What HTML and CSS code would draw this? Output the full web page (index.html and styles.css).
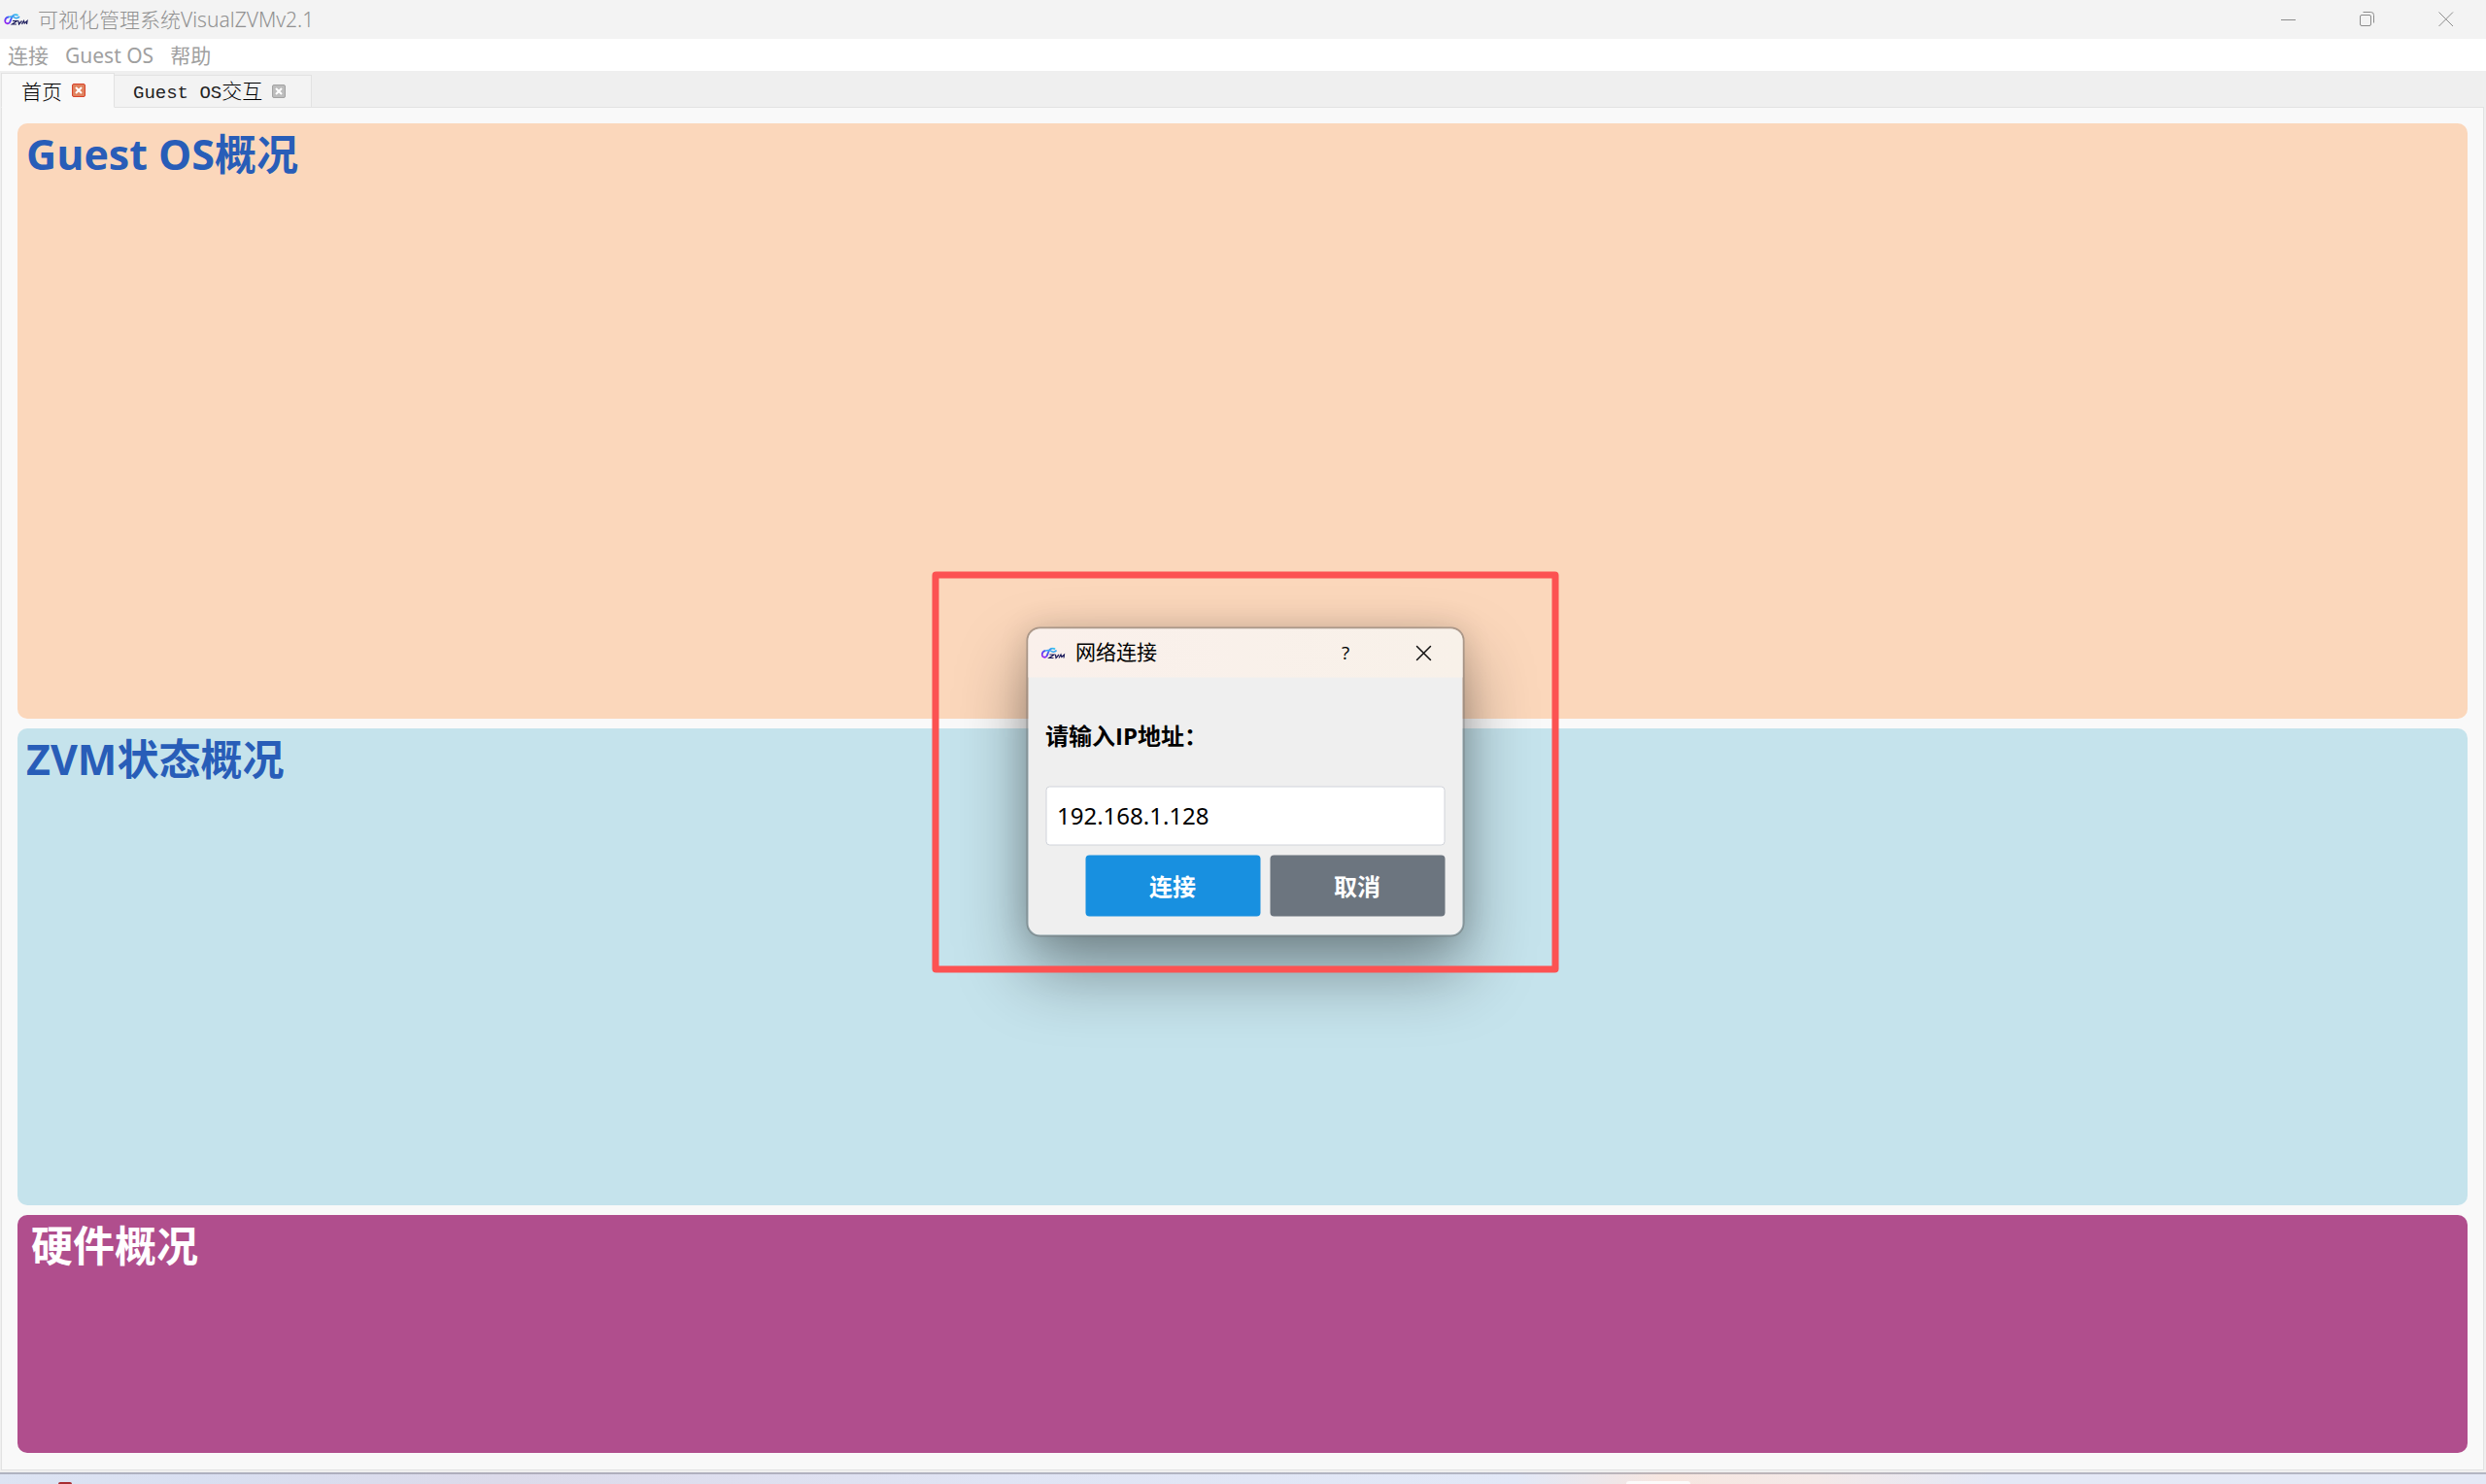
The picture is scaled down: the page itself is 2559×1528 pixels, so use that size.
FILE: index.html
```
<!DOCTYPE html>
<html lang="zh-CN">
<head>
    <meta charset="UTF-8">
    <meta name="viewport" content="width=device-width, initial-scale=1.0">
    <title>可视化管理系统VisualZVMv2.1</title>
    <link rel="stylesheet" href="styles.css">
</head>
<body>
    <!-- Shared logo -->
    <svg class="defs" width="0" height="0" aria-hidden="true">
        <defs>
            <linearGradient id="logo-gradient" x1="0" y1="1" x2="1" y2="0">
                <stop offset="0" stop-color="#a020f0"/>
                <stop offset="0.4" stop-color="#4a4df5"/>
                <stop offset="1" stop-color="#35c8ee"/>
            </linearGradient>
            <symbol id="logo" viewBox="0 0 25 12">
                <path d="M5 3.500C2.500 3.500 1 5.500 1.200 8C1.500 10.500 4.500 11 6 9C7.500 6.500 7.500 3.500 9.500 2C11 0.800 13.500 1 14.500 2" fill="none" stroke="url(#logo-gradient)" stroke-width="1.800"/>
                <path d="M5 3.500C8 2.500 11 3.500 11 4.200C12.500 5.200 15 4.500 16 3" fill="none" stroke="#3aa8f0" stroke-width="1.500"/>
                <path d="M9 7.500H13.500L8.500 11H13M15 7.500L15.500 11L18.500 7.500M18.500 11L20.500 7.500L21.300 10L24 7.500L23.500 11" fill="none" stroke="#1c1c5c" stroke-width="1.200"/>
            </symbol>
        </defs>
    </svg>

    <div class="window">
        <header class="title-bar">
            <svg class="logo"><use href="#logo"/></svg>
            <span class="title">可视化管理系统VisualZVMv2.1</span>
            <div class="window-buttons">
                <button type="button" aria-label="最小化">
                    <svg width="16" height="16" viewBox="0 0 16 16"><path d="M0 8.500H15"/></svg>
                </button>
                <button type="button" aria-label="还原">
                    <svg width="16" height="16" viewBox="0 0 16 16"><rect x="0.500" y="3.500" width="11" height="11" rx="1.500"/><path d="M3.500 0.500H11.500Q14.500 0.500 14.500 3.500V11.500"/></svg>
                </button>
                <button type="button" aria-label="关闭">
                    <svg width="16" height="16" viewBox="0 0 16 16"><path d="M0.500 0.500L15 15M15 0.500L0.500 15"/></svg>
                </button>
            </div>
        </header>

        <nav class="menu-bar">
            <a href="#">连接</a>
            <a href="#">Guest OS</a>
            <a href="#">帮助</a>
        </nav>

        <div class="tab-bar">
            <div class="tab active">
                <a href="#home">首页</a>
                <button type="button" class="tab-close" aria-label="关闭首页">
                    <svg width="8" height="8" viewBox="0 0 8 8"><path d="M1 1L7 7M7 1L1 7"/></svg>
                </button>
            </div>
            <div class="tab">
                <a href="#guest"><span class="latin">Guest OS</span>交互</a>
                <button type="button" class="tab-close" aria-label="关闭Guest OS交互">
                    <svg width="8" height="8" viewBox="0 0 8 8"><path d="M1 1L7 7M7 1L1 7"/></svg>
                </button>
            </div>
        </div>

        <main class="pane">
            <section class="card guest" id="guest"><h2>Guest OS概况</h2></section>
            <section class="card zvm"><h2>ZVM状态概况</h2></section>
            <section class="card hardware"><h2>硬件概况</h2></section>
        </main>
    </div>

    <footer class="taskbar">
        <span class="task-dot"></span>
        <span class="task-active"></span>
    </footer>

    <div class="highlight">
        <form class="dialog" role="dialog" aria-labelledby="dialog-title">
            <div class="dialog-header">
                <svg class="logo"><use href="#logo"/></svg>
                <span id="dialog-title">网络连接</span>
                <button type="button" class="help">?</button>
                <button type="button" aria-label="关闭">
                    <svg width="16" height="16" viewBox="0 0 16 16"><path d="M0.500 0.500L15.500 15.500M15.500 0.500L0.500 15.500"/></svg>
                </button>
            </div>
            <div class="dialog-body">
                <label for="ip">请输入IP地址：</label>
                <input id="ip" type="text" value="192.168.1.128">
                <div class="actions">
                    <button type="button" class="connect">连接</button>
                    <button type="button" class="cancel">取消</button>
                </div>
            </div>
        </form>
    </div>
</body>
</html>
```

FILE: styles.css
```
* {
    box-sizing: border-box;
}
body {
    margin: 0;
    height: 100vh;
    display: flex;
    flex-direction: column;
    position: relative;
    font-family: "Open Sans", "Noto Sans CJK SC", sans-serif;
    font-size: 21px;
    background-color: #efefef;
}
button {
    font-family: inherit;
    border: none;
    background: none;
    padding: 0;
    cursor: pointer;
}
a {
    color: inherit;
    text-decoration: none;
}
.defs {
    position: absolute;
}
.logo {
    width: 25px;
    height: 12px;
}

/* Main window */
.window {
    flex: 1;
    display: flex;
    flex-direction: column;
    padding-bottom: 2px;
}
.title-bar {
    display: flex;
    align-items: center;
    height: 40px;
    padding: 0 1px 0 4px;
    background-color: #f3f3f3;
    color: #919191;
}
.title {
    margin-left: 10px;
    line-height: 40px;
    font-weight: 300;
    font-family: "Noto Sans", "Noto Sans CJK SC", sans-serif;
}
.window-buttons {
    display: flex;
    margin-left: auto;
}
.window-buttons button {
    display: flex;
    align-items: center;
    justify-content: center;
    width: 81px;
    height: 40px;
}
.window-buttons path,
.window-buttons rect {
    fill: none;
    stroke: #8c8c8c;
}
.menu-bar {
    display: flex;
    gap: 17px;
    height: 33px;
    padding-left: 8px;
    line-height: 34px;
    background-color: #fff;
    color: #a0a0a0;
    font-family: "Noto Sans", "Noto Sans CJK SC", sans-serif;
}
.tab-bar {
    display: flex;
    align-items: flex-end;
    height: 38px;
    margin-left: 1px;
    padding-top: 2px;
}
.tab {
    display: flex;
    align-items: center;
    height: 34px;
    padding: 0 26px 0 19px;
    gap: 10px;
    border: 1px solid #e2e2e2;
    border-left: none;
    background-color: #f3f3f3;
    color: #000;
    font-family: "Noto Sans CJK SC", sans-serif;
    font-weight: 300;
    font-size: 21px;
    line-height: 32px;
}
.tab.active {
    height: 36px;
    padding: 0 29px 0 20px;
    border-left: 1px solid #e2e2e2;
    border-bottom-color: #f9f9f9;
    background-color: #f9f9f9;
    z-index: 1;
}
.latin {
    color: #222;
    font-family: "Liberation Mono", monospace;
    font-size: 19px;
}
.tab-close {
    display: flex;
    align-items: center;
    justify-content: center;
    width: 14px;
    height: 14px;
    border: 1px solid #a3a3a3;
    border-radius: 2px;
    background-color: #bdbdbd;
}
.active .tab-close {
    border-color: #d8432c;
    background-color: #e0835f;
}
.tab-close path {
    stroke: #fff;
    stroke-width: 2;
}
.pane {
    flex: 1;
    display: flex;
    flex-direction: column;
    gap: 10px;
    margin: -1px 2px 0 1px;
    padding: 16px 16px 17px;
    border: 1px solid #e2e2e2;
    background-color: #f9f9f9;
}
.card {
    border-radius: 10px;
    padding: 0 9px;
}
.card h2 {
    margin: 0;
    font-size: 43px;
    line-height: 64px;
    color: #285db8;
}
.guest {
    flex: 5;
    background-color: #fbd7bb;
}
.zvm {
    flex: 4;
    background-color: #c5e3ec;
}
.hardware {
    flex: 2;
    padding-left: 14px;
    background-color: #b04e8d;
}
.hardware h2 {
    color: #fff;
}

/* Strip of the desktop taskbar */
.taskbar {
    display: flex;
    align-items: flex-end;
    height: 12px;
    overflow: hidden;
    border-top: 2px solid rgba(120, 120, 130, 0.45);
    background: linear-gradient(90deg, #dde4f3 0%, #d9dff1 8%, #dcdaea 20%, #e0e4f4 40%, #e2e8f7 61%, #f7e6e0 67%, #f4e9e8 73%, #e4e8f6 80%, #e4e9f6 100%);
}
.task-dot {
    width: 14px;
    height: 2px;
    margin-left: 60px;
    border-radius: 7px 7px 0 0;
    background-color: #a82c30;
}
.task-active {
    width: 66px;
    height: 3px;
    margin-left: 1600px;
    border-radius: 4px 4px 0 0;
    background-color: #fcfafa;
}

/* Connection dialog with its highlight frame */
.highlight {
    position: absolute;
    top: 52%;
    left: 50%;
    width: 645px;
    margin-left: 2px;
    transform: translate(-50%, -50%);
    padding: 57px 97px 37px;
}
.highlight::after {
    content: "";
    position: absolute;
    inset: 0;
    border: 7px solid #fc5252;
    border-radius: 4px;
    pointer-events: none;
}
.dialog {
    border: 2px solid rgba(90, 90, 90, 0.45);
    border-radius: 14px;
    background-color: #efefef;
    background-clip: padding-box;
    box-shadow: 0 36px 70px rgba(0, 0, 0, 0.38), 0 0 30px rgba(0, 0, 0, 0.12);
}
.dialog-header {
    display: flex;
    align-items: center;
    height: 50px;
    padding-left: 13px;
    border-radius: 12px 12px 0 0;
    background: linear-gradient(90deg, #faf0eb, #f8f1e9);
}
.dialog-header span {
    margin: 0 auto 0 11px;
    color: #000;
    line-height: 46px;
    padding-bottom: 4px;
}
.dialog-header button {
    display: flex;
    align-items: center;
    justify-content: center;
    width: 80px;
    height: 50px;
}
.dialog-header .help {
    font-size: 19px;
    padding-bottom: 2px;
}
.dialog-header path {
    stroke: #111;
    stroke-width: 1.5;
}
.dialog-body {
    display: flex;
    flex-direction: column;
    padding: 0 18px 19px;
}
.dialog-body label {
    padding: 30px 0 22px;
    font-size: 24px;
    font-weight: bold;
    line-height: 60px;
}
.dialog-body input {
    height: 61px;
    padding: 0 11px 2px;
    border: 1px solid #d0d3da;
    border-radius: 4px;
    background-color: #fff;
    font-family: "Noto Sans", sans-serif;
    font-size: 24px;
}
.actions {
    display: flex;
    justify-content: flex-end;
    gap: 10px;
    margin-top: 10px;
}
.actions button {
    width: 180px;
    height: 63px;
    padding-bottom: 2px;
    border-radius: 4px;
    color: #fff;
    font-size: 24px;
    font-weight: bold;
}
.connect {
    background-color: #1890e0;
}
.cancel {
    background-color: #6c757f;
}
```
